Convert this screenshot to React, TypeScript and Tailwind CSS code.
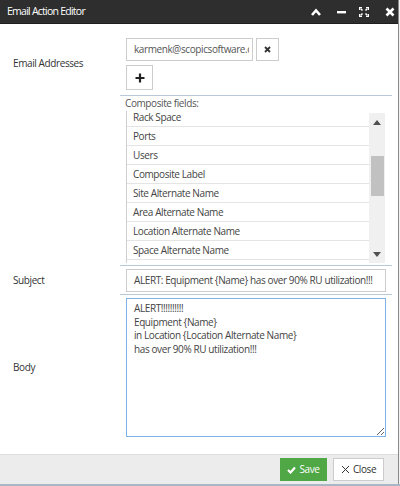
import React from "react";

const font = { fontFamily: '"Open Sans", "Noto Sans", sans-serif' };

function Tri({ up }: { up?: boolean }) {
  return (
    <svg width="8" height="5" viewBox="0 0 8 5">
      {up ? <path d="M0 5 L4 0 L8 5 Z" fill="#505050" /> : <path d="M0 0 L8 0 L4 5 Z" fill="#505050" />}
    </svg>
  );
}

const items = [
  "Rack Space",
  "Ports",
  "Users",
  "Composite Label",
  "Site Alternate Name",
  "Area Alternate Name",
  "Location Alternate Name",
  "Space Alternate Name",
  "",
];

export default function App() {
  return (
    <div className="w-[400px] h-[486px] bg-[#f2f2f2] overflow-hidden flex flex-col" style={font}>
      <div className="w-[399px] h-[484px] bg-white flex flex-col border-r border-[#8a8a8a]">
        {/* Header */}
        <div className="h-[24px] bg-[#2e2e2e] flex items-center pl-[7px] pr-[3px] border-b border-[#1e1e1e]">
          <span className="text-white text-[10.5px] tracking-[-0.75px] flex-1">Email Action Editor</span>
          <div className="flex items-center gap-[14px]">
            <svg width="10" height="8" viewBox="0 0 10 8">
              <path d="M1 7 L5 2.5 L9 7" stroke="white" strokeWidth="2.6" fill="none" />
            </svg>
            <svg width="9" height="8" viewBox="0 0 9 8" className="ml-[2px]">
              <rect x="0" y="3" width="9" height="2.4" fill="white" />
            </svg>
            <svg width="10" height="10" viewBox="0 0 10 10" className="-ml-[1px]">
              <path d="M0 0 H3 V1 H1 V3 H0 Z M10 0 H7 V1 H9 V3 H10 Z M0 10 H3 V9 H1 V7 H0 Z M10 10 H7 V9 H9 V7 H10 Z" fill="white" />
              <path d="M1.5 1.5 L3.5 3.5 M8.5 1.5 L6.5 3.5 M1.5 8.5 L3.5 6.5 M8.5 8.5 L6.5 6.5" stroke="white" strokeWidth="1.6" />
            </svg>
            <svg width="10" height="10" viewBox="0 0 10 10" className="ml-[2px]">
              <path d="M1.5 1.5 L8.5 8.5 M8.5 1.5 L1.5 8.5" stroke="white" strokeWidth="2.6" />
            </svg>
          </div>
        </div>

        {/* Body */}
        <div className="flex-1 flex flex-col text-[#333] text-[10px] tracking-[-0.4px]">
          {/* Email row */}
          <div className="flex">
            <div className="w-[120px] pl-[13px] flex items-center pt-[7px]">Email Addresses</div>
            <div className="w-[272px] pl-[6px] pr-[6px] pt-[14px] pb-[5px] border-b border-[#b9c9d9] flex flex-col gap-[4px]">
              <div className="flex gap-[3px]">
                <div className="w-[127px] h-[23px] border border-[#cccccc] flex items-center pl-[7px] pr-[3px] overflow-hidden whitespace-nowrap text-[#555]">
                  <span className="overflow-hidden">karmenk@scopicsoftware.com</span>
                </div>
                <div className="w-[23px] h-[23px] border border-[#cccccc] flex items-center justify-center">
                  <svg width="7" height="7" viewBox="0 0 7 7">
                    <path d="M1 1 L6 6 M6 1 L1 6" stroke="#333" strokeWidth="1.8" />
                  </svg>
                </div>
              </div>
              <div className="w-[27px] h-[25px] border border-[#cccccc] flex items-center justify-center">
                <svg width="10" height="10" viewBox="0 0 10 10">
                  <path d="M5 0.5 V9.5 M0.5 5 H9.5" stroke="#222" strokeWidth="2.2" />
                </svg>
              </div>
            </div>
          </div>

          {/* Composite fields row */}
          <div className="flex">
            <div className="w-[120px]" />
            <div className="w-[272px] pl-[6px] pr-[7px] pb-[2px] border-b border-[#b9c9d9] flex flex-col">
              <div className="text-[10px] text-[#555] h-[15px] leading-[15px] -ml-[1px]">Composite fields:</div>
              <div className="flex h-[152px]">
                <div className="flex-1 border-l border-[#cfcfcf] overflow-hidden">
                  <div className="-mt-[3px]">
                    {items.map((it, i) => (
                      <div key={i} className="h-[19px] border-b border-[#e4e4e4] flex items-center pl-[6px] text-[#444]">
                        {it}
                      </div>
                    ))}
                  </div>
                </div>
                <div className="w-[16px] h-[150px] mt-[2px] bg-[#f0f0f0] flex flex-col items-center">
                  <div className="h-[18px] flex items-center justify-center">
                    <Tri up />
                  </div>
                  <div className="w-[13px] h-[40px] bg-[#c1c1c1] mt-[25px]" />
                  <div className="flex-1" />
                  <div className="h-[18px] flex items-center justify-center">
                    <Tri />
                  </div>
                </div>
              </div>
            </div>
          </div>

          {/* Subject row */}
          <div className="flex">
            <div className="w-[120px] pl-[13px] flex items-center">Subject</div>
            <div className="w-[272px] pl-[6px] pr-[6px] pt-[3px] pb-[2px] border-b border-[#b9c9d9]">
              <div className="h-[23px] border border-[#cccccc] flex items-center pl-[7px] text-[#444] whitespace-nowrap overflow-hidden">
                <span>{"ALERT: Equipment {Name} has over 90% RU utilization!!!"}</span>
              </div>
            </div>
          </div>

          {/* Body row */}
          <div className="flex">
            <div className="w-[120px] pl-[13px] flex items-center pt-[2px]">Body</div>
            <div className="w-[272px] pl-[6px] pr-[6px] pt-[3px]">
              <textarea
                readOnly
                className="block w-[260px] h-[139px] border border-[#7eb2e6] outline-none pl-[7px] pt-[3px] text-[10px] tracking-[-0.4px] leading-[13.5px] text-[#444] resize"
                style={font}
                defaultValue={"ALERT!!!!!!!!!!\nEquipment {Name}\nin Location {Location Alternate Name}\nhas over 90% RU utilization!!!"}
              />
            </div>
          </div>
        </div>

        {/* Footer */}
        <div className="h-[30px] bg-[#ececec] border-t border-[#dedede] flex items-start justify-end pt-[3px] pr-[14px] gap-[6px] text-[10px] tracking-[-0.4px]">
          <div className="w-[47px] h-[23px] bg-[#4fa845] flex items-center justify-center gap-[3px] text-white">
            <svg width="9" height="8" viewBox="0 0 9 8">
              <path d="M1 4 L3.5 6.5 L8 1.5" stroke="white" strokeWidth="2.2" fill="none" />
            </svg>
            <span>Save</span>
          </div>
          <div className="w-[51px] h-[23px] bg-white border border-[#cccccc] flex items-center justify-center gap-[3px] text-[#333]">
            <svg width="9" height="9" viewBox="0 0 9 9">
              <path d="M1 1 L8 8 M8 1 L1 8" stroke="#333" strokeWidth="1" />
            </svg>
            <span>Close</span>
          </div>
        </div>
      </div>
      <div className="h-[2px] bg-[#a9b6c3]" />
    </div>
  );
}
